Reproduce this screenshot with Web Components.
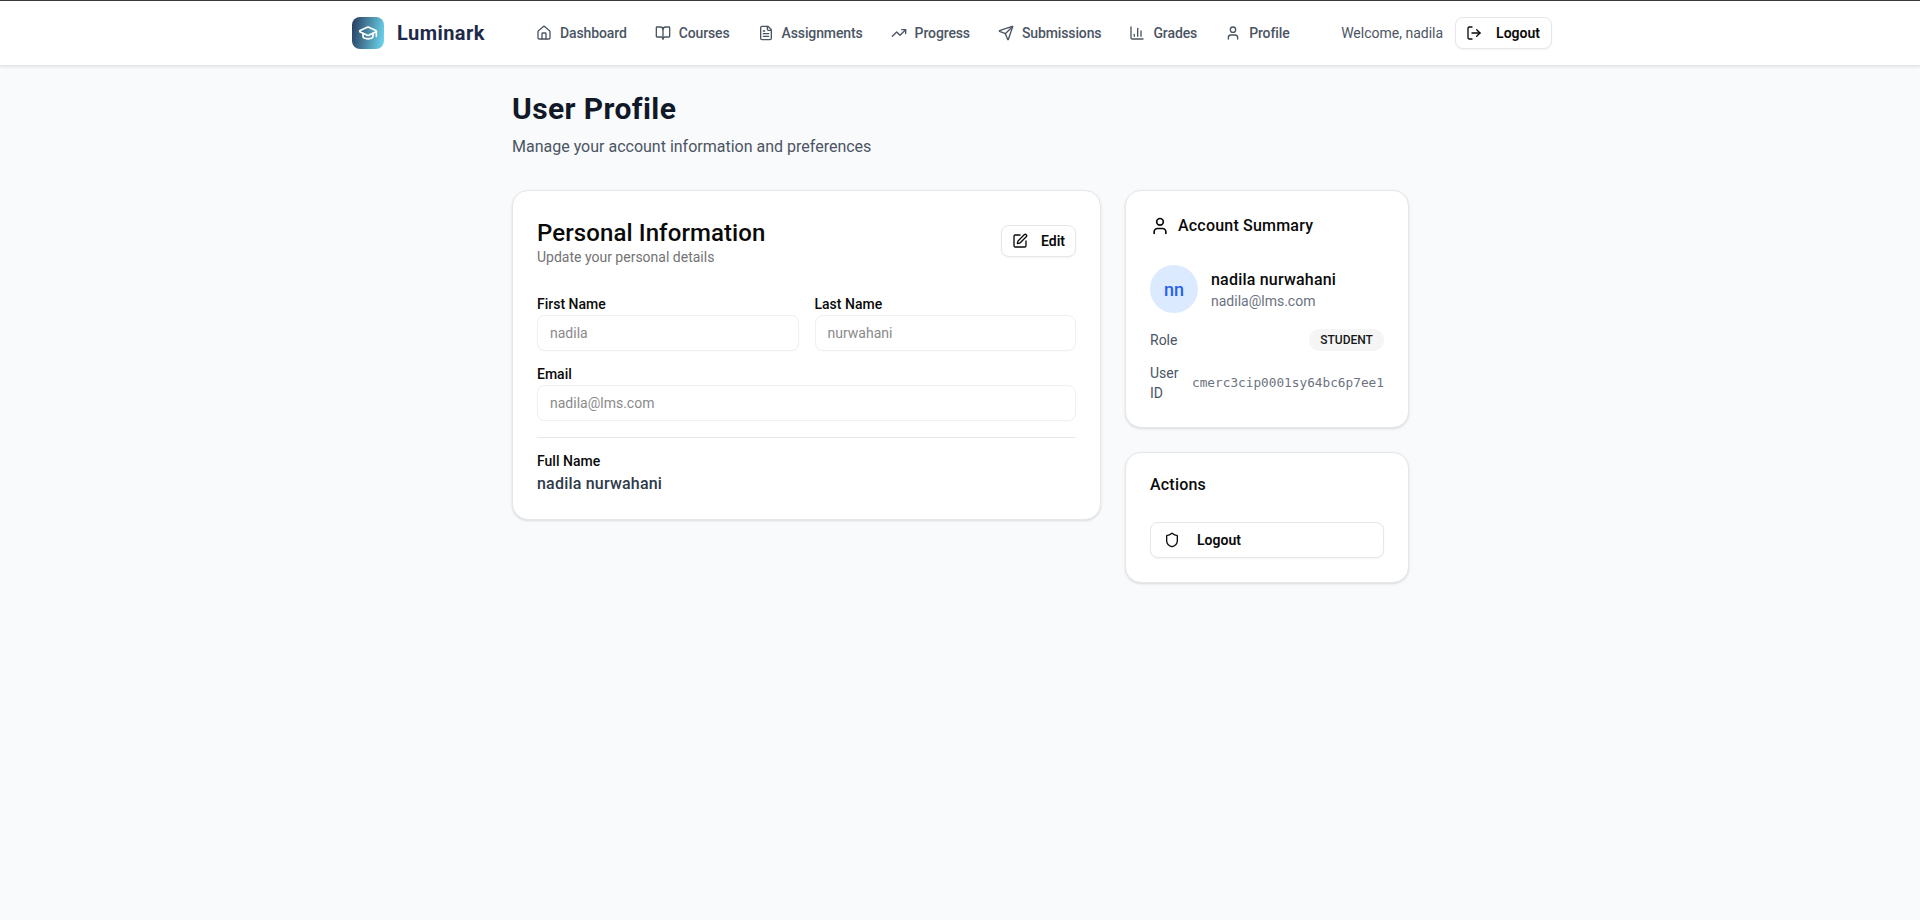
<!DOCTYPE html>
<html lang="en">
<head>
<meta charset="utf-8">
<title>User Profile</title>
<style>
  html, body { margin: 0; padding: 0; }
  body {
    background: #f9fafb;
    font-family: Roboto, "Noto Sans", sans-serif;
    color: #111827;
    min-height: 920px;
    border-top: 1px solid #3a3a3a;
    box-sizing: border-box;
  }
</style>
</head>
<body>
<app-nav></app-nav>
<profile-page></profile-page>

<script>
const icons = {
  home: '<path d="M15 21v-8a1 1 0 0 0-1-1h-4a1 1 0 0 0-1 1v8"/><path d="M3 10a2 2 0 0 1 .709-1.528l7-5.999a2 2 0 0 1 2.582 0l7 5.999A2 2 0 0 1 21 10v9a2 2 0 0 1-2 2H5a2 2 0 0 1-2-2z"/>',
  book: '<path d="M12 7v14"/><path d="M3 18a1 1 0 0 1-1-1V4a1 1 0 0 1 1-1h5a4 4 0 0 1 4 4 4 4 0 0 1 4-4h5a1 1 0 0 1 1 1v13a1 1 0 0 1-1 1h-6a3 3 0 0 0-3 3 3 3 0 0 0-3-3z"/>',
  file: '<path d="M15 2H6a2 2 0 0 0-2 2v16a2 2 0 0 0 2 2h12a2 2 0 0 0 2-2V7Z"/><path d="M14 2v4a2 2 0 0 0 2 2h4"/><path d="M10 9H8"/><path d="M16 13H8"/><path d="M16 17H8"/>',
  trend: '<polyline points="22 7 13.5 15.5 8.5 10.5 2 17"/><polyline points="16 7 22 7 22 13"/>',
  send: '<path d="M14.536 21.686a.5.5 0 0 0 .937-.024l6.5-19a.496.496 0 0 0-.635-.635l-19 6.5a.5.5 0 0 0-.024.937l7.93 3.18a2 2 0 0 1 1.112 1.11z"/><path d="m21.854 2.147-10.94 10.939"/>',
  chart: '<path d="M3 3v16a2 2 0 0 0 2 2h16"/><path d="M18 17V9"/><path d="M13 17V5"/><path d="M8 17v-3"/>',
  user: '<path d="M19 21v-2a4 4 0 0 0-4-4H9a4 4 0 0 0-4 4v2"/><circle cx="12" cy="7" r="4"/>',
  logout: '<path d="M9 21H5a2 2 0 0 1-2-2V5a2 2 0 0 1 2-2h4"/><polyline points="16 17 21 12 16 7"/><line x1="21" x2="9" y1="12" y2="12"/>',
  edit: '<path d="M12 3H5a2 2 0 0 0-2 2v14a2 2 0 0 0 2 2h14a2 2 0 0 0 2-2v-7"/><path d="M18.375 2.625a1 1 0 0 1 3 3l-9.013 9.014a2 2 0 0 1-.853.505l-2.873.84a.5.5 0 0 1-.62-.62l.84-2.873a2 2 0 0 1 .506-.852z"/>',
  shield: '<path d="M20 13c0 5-3.5 7.5-7.66 8.95a1 1 0 0 1-.67-.01C7.5 20.5 4 18 4 13V6a1 1 0 0 1 1-1c2 0 4.5-1.2 6.24-2.72a1.17 1.17 0 0 1 1.52 0C14.51 3.81 17 5 19 5a1 1 0 0 1 1 1z"/>'
};

class LucideIcon extends HTMLElement {
  connectedCallback() {
    const size = this.getAttribute('size') || 16;
    const shadow = this.shadowRoot || this.attachShadow({ mode: 'open' });
    shadow.innerHTML = `
    <style>
      :host { display: inline-flex; flex: none; width: ${size}px; height: ${size}px; }
      svg { display: block; }
    </style>
    <svg xmlns="http://www.w3.org/2000/svg" width="${size}" height="${size}" viewBox="0 0 24 24" fill="none"
      stroke="currentColor" stroke-width="2" stroke-linecap="round" stroke-linejoin="round">${icons[this.getAttribute('name')]}</svg>`;
  }
}
customElements.define('lucide-icon', LucideIcon);

class NavLink extends HTMLElement {
  constructor() {
    super();
    this.attachShadow({ mode: 'open' }).innerHTML = `
    <style>
      :host {
        display: inline-flex;
        align-items: center;
        gap: 8px;
        padding: 8px 12px;
        font-size: 14px;
        line-height: 20px;
        font-weight: 500;
        letter-spacing: -0.12px;
        color: #4b5563;
        white-space: nowrap;
      }
    </style>
    <slot name="icon"></slot><slot></slot>`;
  }
}
customElements.define('nav-link', NavLink);

class OutlineButton extends HTMLElement {
  constructor() {
    super();
    this.attachShadow({ mode: 'open' }).innerHTML = `
    <style>
      :host {
        display: inline-flex;
        align-items: center;
        box-sizing: border-box;
        gap: 14px;
        height: 32px;
        padding: 0 11px 0 10px;
        background: #fff;
        border: 1px solid #e5e7eb;
        border-radius: 8px;
        box-shadow: 0 1px 2px rgba(0, 0, 0, 0.05);
        font-size: 14px;
        font-weight: 600;
        color: #0a0a0a;
        white-space: nowrap;
      }
    </style>
    <slot name="icon"></slot><slot></slot>`;
  }
}
customElements.define('outline-button', OutlineButton);

class AppNav extends HTMLElement {
  constructor() {
    super();
    this.attachShadow({ mode: 'open' }).innerHTML = `
    <style>
      :host {
        display: block;
        background: #fff;
        border-bottom: 1px solid #e5e7eb;
        box-shadow: 0 1px 3px rgba(0, 0, 0, 0.1);
        position: relative;
      }
      .bar {
        width: 1200px;
        height: 64px;
        margin-left: 352px;
        display: flex;
        align-items: center;
      }
      .brand { display: flex; align-items: center; gap: 13px; width: 172px; flex: none; }
      .logo {
        width: 32px;
        height: 32px;
        border-radius: 8px;
        background: linear-gradient(100deg, #25395c, #6fdcf2);
        display: flex;
        align-items: center;
        justify-content: center;
        color: #fff;
      }
      .name { font-size: 20px; font-weight: 700; color: #1e2a4a; letter-spacing: 0.45px; }
      nav { display: flex; gap: 4px; }
      .right { margin-left: auto; display: flex; align-items: center; gap: 12px; }
      .welcome { font-size: 14px; color: #4b5563; white-space: nowrap; }
    </style>
    <div class="bar">
      <div class="brand">
        <div class="logo">
          <svg width="20" height="20" viewBox="0 0 24 24" fill="none" stroke="currentColor" stroke-width="2" stroke-linecap="round" stroke-linejoin="round"><path d="M21.42 10.922a1 1 0 0 0-.019-1.838L12.83 5.18a2 2 0 0 0-1.66 0L2.6 9.08a1 1 0 0 0 0 1.832l8.57 3.908a2 2 0 0 0 1.66 0z"/><path d="M22 10v6"/><path d="M6 12.5V16a6 3 0 0 0 12 0v-3.5"/></svg>
        </div>
        <span class="name">Luminark</span>
      </div>
      <nav>
        <nav-link><lucide-icon slot="icon" name="home"></lucide-icon>Dashboard</nav-link>
        <nav-link><lucide-icon slot="icon" name="book"></lucide-icon>Courses</nav-link>
        <nav-link><lucide-icon slot="icon" name="file"></lucide-icon>Assignments</nav-link>
        <nav-link><lucide-icon slot="icon" name="trend"></lucide-icon>Progress</nav-link>
        <nav-link><lucide-icon slot="icon" name="send"></lucide-icon>Submissions</nav-link>
        <nav-link><lucide-icon slot="icon" name="chart"></lucide-icon>Grades</nav-link>
        <nav-link><lucide-icon slot="icon" name="user"></lucide-icon>Profile</nav-link>
      </nav>
      <div class="right">
        <span class="welcome">Welcome, nadila</span>
        <outline-button><lucide-icon slot="icon" name="logout"></lucide-icon>Logout</outline-button>
      </div>
    </div>`;
  }
}
customElements.define('app-nav', AppNav);

class InfoCard extends HTMLElement {
  constructor() {
    super();
    this.attachShadow({ mode: 'open' }).innerHTML = `
    <style>
      :host {
        display: block;
        box-sizing: border-box;
        background: #fff;
        border: 1px solid #e5e7eb;
        border-radius: 16px;
        box-shadow: 0 1px 3px rgba(0, 0, 0, 0.1), 0 1px 2px -1px rgba(0, 0, 0, 0.1);
        padding: 24px;
        color: #0a0a0a;
      }
    </style>
    <slot></slot>`;
  }
}
customElements.define('info-card', InfoCard);

class FormField extends HTMLElement {
  constructor() {
    super();
    this.attachShadow({ mode: 'open' }).innerHTML = `
    <style>
      :host { display: block; }
      label { display: block; font-size: 14px; line-height: 14px; font-weight: 500; color: #0a0a0a; margin-bottom: 4px; }
      .input {
        box-sizing: border-box;
        height: 36px;
        padding: 0 12px;
        display: flex;
        align-items: center;
        background: #fff;
        border: 1px solid #f0f0f1;
        border-radius: 8px;
        box-shadow: 0 1px 2px rgba(0, 0, 0, 0.02);
        font-size: 14px;
        color: #8a8a8a;
      }
    </style>
    <label>${this.getAttribute('label')}</label>
    <div class="input">${this.getAttribute('value')}</div>`;
  }
}
customElements.define('form-field', FormField);

class ProfilePage extends HTMLElement {
  constructor() {
    super();
    this.attachShadow({ mode: 'open' }).innerHTML = `
    <style>
      :host { display: block; width: 896px; margin: 0 auto; padding-top: 25px; }
      h1 { margin: 0; font-size: 30px; line-height: 36px; font-weight: 700; color: #111827; letter-spacing: 0.4px; }
      .lead { margin: 8px 0 0; font-size: 16px; line-height: 24px; color: #4b5563; }
      .grid { display: grid; grid-template-columns: 589px 282px; gap: 24px; margin-top: 31px; align-items: start; }
      .stack { display: grid; gap: 24px; }
      .head { display: flex; justify-content: space-between; align-items: center; margin-bottom: 32px; padding-top: 2px; }
      .head outline-button { gap: 13px; padding-right: 10px; }
      h2 { margin: 0; font-size: 24px; line-height: 32px; font-weight: 500; letter-spacing: 0.1px; }
      .sub { font-size: 14px; line-height: 16px; color: #737373; }
      .two { display: grid; grid-template-columns: 1fr 1fr; gap: 16px; margin-bottom: 16px; }
      hr { border: 0; border-top: 1px solid #e5e7eb; margin: 16px 0 13px; }
      .label { font-size: 14px; line-height: 20px; font-weight: 500; }
      .full { font-size: 16px; line-height: 22px; font-weight: 500; color: #2f3a4a; margin-top: 2px; letter-spacing: 0.2px; }
      h3 { margin: 0; font-size: 16px; line-height: 22px; font-weight: 500; display: flex; align-items: center; gap: 8px; letter-spacing: 0.2px; }
      .actions h3 { line-height: 16px; }
      .who { display: flex; align-items: center; gap: 13px; margin-top: 28px; }
      .avatar { width: 48px; height: 48px; border-radius: 50%; background: #dbeafe; color: #2563eb; display: flex; align-items: center; justify-content: center; font-size: 18px; font-weight: 500; flex: none; }
      .who b { display: block; font-size: 16px; line-height: 24px; font-weight: 500; letter-spacing: 0.2px; }
      .who span { display: block; font-size: 14px; line-height: 18px; color: #6b7280; }
      .row { display: flex; justify-content: space-between; align-items: center; gap: 12px; font-size: 14px; line-height: 20px; color: #4b5563; }
      .badge { background: #f5f5f5; color: #171717; border-radius: 999px; font-size: 12px; line-height: 16px; font-weight: 500; padding: 3px 11px; }
      .id { width: 30px; }
      code { font-family: "DejaVu Sans Mono", monospace; font-size: 12.75px; color: #6b7280; white-space: nowrap; }
      .wide { display: flex; margin-top: 29px; }
      .wide outline-button { width: 100%; height: 36px; padding: 0 13px; gap: 17px; }
    </style>
    <h1>User Profile</h1>
    <p class="lead">Manage your account information and preferences</p>
    <div class="grid">
      <info-card>
        <div class="head">
          <div>
            <h2>Personal Information</h2>
            <div class="sub">Update your personal details</div>
          </div>
          <outline-button><lucide-icon slot="icon" name="edit"></lucide-icon>Edit</outline-button>
        </div>
        <div class="two">
          <form-field label="First Name" value="nadila"></form-field>
          <form-field label="Last Name" value="nurwahani"></form-field>
        </div>
        <form-field label="Email" value="nadila@lms.com"></form-field>
        <hr>
        <div class="label">Full Name</div>
        <div class="full">nadila nurwahani</div>
      </info-card>
      <div class="stack">
        <info-card>
          <h3><lucide-icon size="20" name="user"></lucide-icon>Account Summary</h3>
          <div class="who">
            <div class="avatar">nn</div>
            <div><b>nadila nurwahani</b><span>nadila@lms.com</span></div>
          </div>
          <div class="row" style="margin-top:16px"><span>Role</span><span class="badge">STUDENT</span></div>
          <div class="row" style="margin-top:12px"><span class="id">User ID</span><code>cmerc3cip0001sy64bc6p7ee1</code></div>
        </info-card>
        <info-card class="actions">
          <h3>Actions</h3>
          <div class="wide"><outline-button><lucide-icon slot="icon" name="shield"></lucide-icon>Logout</outline-button></div>
        </info-card>
      </div>
    </div>`;
  }
}
customElements.define('profile-page', ProfilePage);
</script>
</body>
</html>
